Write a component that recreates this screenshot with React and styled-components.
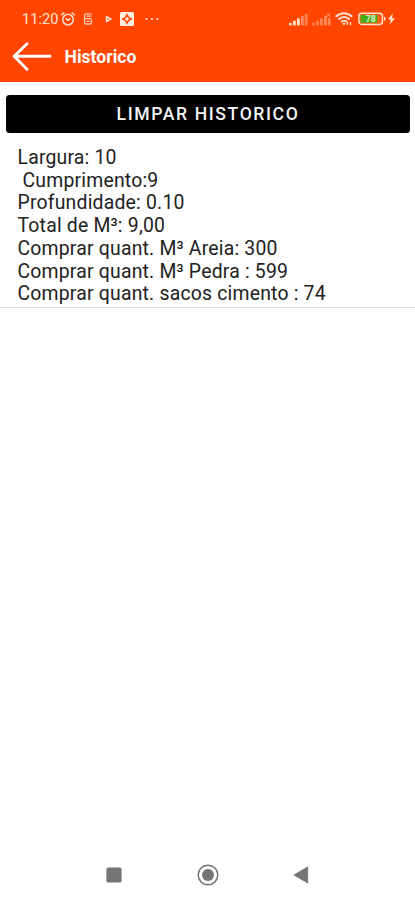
import React from 'react';
import styled, { createGlobalStyle } from 'styled-components';

const GlobalStyle = createGlobalStyle`
  * { box-sizing: border-box; }
  body { margin: 0; background: #fff; font-family: Roboto, sans-serif; }
`;

const Screen = styled.div`
  display: flex;
  flex-direction: column;
  width: 415px;
  height: 900px;
  overflow: hidden;
  background: #fefefe;
`;

const Header = styled.header`
  height: 82px;
  flex: none;
  background: #ff4500;
  color: #fff;
`;

const StatusBar = styled.div`
  display: flex;
  justify-content: space-between;
  height: 36px;
  padding: 0 19px 0 22px;
  color: #ffe3d0;
`;

const StatusGroup = styled.div`
  display: flex;
  align-items: center;
  height: 38px;
`;

const Clock = styled.span`
  width: 37px;
  font-size: 14.5px;
  line-height: 18px;
  letter-spacing: 0.1px;
  white-space: nowrap;
  padding-top: 1px;
`;

const StatusIcon = styled.svg`
  display: block;
  flex: none;
  margin-left: ${(p) => p.$gap || 0}px;
`;

const TitleBar = styled.div`
  display: flex;
  align-items: center;
  height: 42px;
  padding-left: 12px;
`;

const BackButton = styled.button`
  width: 40px;
  height: 30px;
  padding: 0;
  border: 0;
  background: none;
  color: #fff;
  svg { display: block; }
`;

const Title = styled.h1`
  margin: 0 0 0 12.5px;
  font-size: 17.6px;
  line-height: 22px;
  font-weight: 700;
  letter-spacing: 0px;
`;

const ClearButton = styled.button`
  flex: none;
  height: 38px;
  margin: 12.5px 5px 0 6px;
  padding: 1px 0 0;
  border: 0;
  border-radius: 3.5px;
  background: #000;
  color: #f4f4f4;
  font: 500 17.6px/22px Roboto, sans-serif;
  letter-spacing: 1.6px;
`;

const Entry = styled.section`
  flex: none;
  margin-top: 14.5px;
  padding-left: 17.5px;
  height: 160.5px;
  border-bottom: 1px solid #dcdcdc;
  color: #222;
`;

const Line = styled.div`
  font-size: 19.4px;
  line-height: 22.7px;
  letter-spacing: 0.2px;
  white-space: pre;
`;

const NavBar = styled.nav`
  display: flex;
  justify-content: space-between;
  align-items: center;
  height: 50px;
  margin-top: auto;
  padding: 0 106px 0 106px;
`;

const lines = [
  'Largura: 10',
  ' Cumprimento:9',
  'Profundidade: 0.10',
  'Total de M³: 9,00',
  'Comprar quant. M³ Areia: 300',
  'Comprar quant. M³ Pedra : 599',
  'Comprar quant. sacos cimento : 74',
];

const AlarmIcon = () => (
  <StatusIcon $gap={1} width="16" height="16" viewBox="0 0 16 16" fill="none" stroke="currentColor" strokeWidth="1.5">
    <circle cx="8" cy="8.6" r="5.3" />
    <path d="M1.2 4.2L4.3 1.6M14.8 4.2L11.7 1.6M5.7 7.2L8 9.2l2.4-1.6" />
  </StatusIcon>
);

const AppIcon = () => (
  <StatusIcon $gap={7} width="10" height="14" viewBox="0 0 10 14" fill="none" stroke="currentColor" strokeWidth="1.3" opacity=".85">
    <path d="M8.6 1.8H3.2Q1.5 1.8 1.5 3.6v1.8q0 1.2 1.5 1.2h3.7q1.8 0 1.8 1.8v1.4Q8.5 12 6.6 12H3.4Q1.5 12 1.5 10V6M3.6 4.2h4.9M3.6 9.4h2.9" />
  </StatusIcon>
);

const PlayIcon = () => (
  <StatusIcon $gap={12} width="8" height="10" viewBox="0 0 8 10" fill="currentColor">
    <path fillRule="evenodd" d="M.8 1.4L7.5 5 .8 8.8zM2.5 4v2.2L4.4 5z" />
  </StatusIcon>
);

const TileIcon = () => (
  <StatusIcon $gap={7} width="14" height="14" viewBox="0 0 14 14">
    <rect width="14" height="14" rx="1.5" fill="#fff0e2" />
    <path d="M7 1.2L9.1 4.9 12.8 7 9.1 9.1 7 12.8 4.9 9.1 1.2 7l3.7-2.1z" fill="#ff4500" />
    <path d="M7 4.7L9.3 7 7 9.3 4.7 7z" fill="#ffe3d0" />
  </StatusIcon>
);

const DotsIcon = () => (
  <StatusIcon $gap={10} width="16" height="4" viewBox="0 0 16 4" fill="currentColor">
    <circle cx="2.4" cy="2" r="1.1" /><circle cx="7.9" cy="2" r="1.1" /><circle cx="13.4" cy="2" r="1.1" />
  </StatusIcon>
);

const Signal = ({ strong, gap }) => (
  <StatusIcon $gap={gap} width="19" height="13" viewBox="0 0 19 13" fill="currentColor">
    <rect x="0" y="9.8" width="2.8" height="2.7" rx=".7" opacity={strong ? 1 : 0.4} />
    <rect x="4" y="7.8" width="2.8" height="4.7" rx=".7" opacity={strong ? 1 : 0.4} />
    <rect x="8" y="5.2" width="2.8" height="7.3" rx=".7" opacity={strong ? 1 : 0.4} />
    <rect x="12" y="2.8" width="2.8" height="9.7" rx=".7" opacity=".45" />
    <rect x="15.8" y={strong ? 0.7 : 5} width="2.8" height={strong ? 11.8 : 7.5} rx=".7" opacity=".4" />
    {!strong && <path d="M14.8.4l3.4 3.4m0-3.4l-3.4 3.4" stroke="currentColor" strokeWidth="1" opacity=".65" />}
  </StatusIcon>
);

const WifiIcon = () => (
  <StatusIcon $gap={4} width="18" height="14" viewBox="0 0 18 14" fill="none" stroke="currentColor" strokeWidth="1.9">
    <path d="M.7 4.7Q9-2.3 17.3 4.7M3.3 7.5Q9 2.7 14.7 7.5M6 10Q9 7.8 12 10" />
    <path d="M7.2 11.1h3.6L9 13.4z" fill="currentColor" stroke="none" />
    <path d="M12.4 12.8V9.7M15.5 10.3v3" strokeWidth="1.4" />
  </StatusIcon>
);

const BatteryIcon = () => (
  <StatusIcon $gap={5} width="28" height="14" viewBox="0 0 28 14">
    <rect x=".9" y="1.2" width="23.6" height="11.2" rx="3" fill="#ff5a1a" stroke="#ffe3c8" strokeWidth="1.5" />
    <rect x="2.6" y="2.9" width="16.8" height="7.8" rx="1" fill="#45ad18" />
    <path d="M26 4.5q1.6 0 1.6 2.3T26 9.1z" fill="#ffe3c8" />
    <text x="12.8" y="10" textAnchor="middle" fontSize="8.6" fontWeight="700" fontFamily="Roboto, sans-serif" fill="#dcf5cf">78</text>
  </StatusIcon>
);

const BoltIcon = () => (
  <StatusIcon $gap={1} width="9" height="12" viewBox="0 0 9 12" fill="currentColor">
    <path d="M5.8.5L.8 6.6h3L2.8 11.5 8 5.2H5z" />
  </StatusIcon>
);

export default function App() {
  return (
    <Screen>
      <GlobalStyle />
      <Header>
        <StatusBar>
          <StatusGroup>
            <Clock>11:20</Clock>
            <AlarmIcon />
            <AppIcon />
            <PlayIcon />
            <TileIcon />
            <DotsIcon />
          </StatusGroup>
          <StatusGroup>
            <Signal strong />
            <Signal gap={4} />
            <WifiIcon />
            <BatteryIcon />
            <BoltIcon />
          </StatusGroup>
        </StatusBar>
        <TitleBar>
          <BackButton aria-label="Voltar">
            <svg width="40" height="30" viewBox="0 0 40 30" fill="none" stroke="currentColor" strokeWidth="2.9" strokeLinecap="round" strokeLinejoin="round">
              <path d="M38 14.2H2.5M15 1.8L2.2 14.2 15 27.2" />
            </svg>
          </BackButton>
          <Title>Historico</Title>
        </TitleBar>
      </Header>
      <ClearButton>LIMPAR HISTORICO</ClearButton>
      <Entry>
        {lines.map((line) => <Line key={line}>{line}</Line>)}
      </Entry>
      <NavBar>
        <svg width="16" height="16" viewBox="0 0 16 16"><rect x=".4" y=".4" width="15.2" height="15.2" rx="2.2" fill="#747474" /></svg>
        <svg width="22" height="22" viewBox="0 0 22 22"><circle cx="11" cy="11" r="9.8" fill="none" stroke="#747474" strokeWidth="1.5" /><circle cx="11" cy="11" r="6" fill="#747474" /></svg>
        <svg width="16" height="18" viewBox="0 0 16 18"><path d="M14.8.8v16.4L.8 9z" fill="#747474" stroke="#747474" strokeWidth=".6" strokeLinejoin="round" /></svg>
      </NavBar>
    </Screen>
  );
}
